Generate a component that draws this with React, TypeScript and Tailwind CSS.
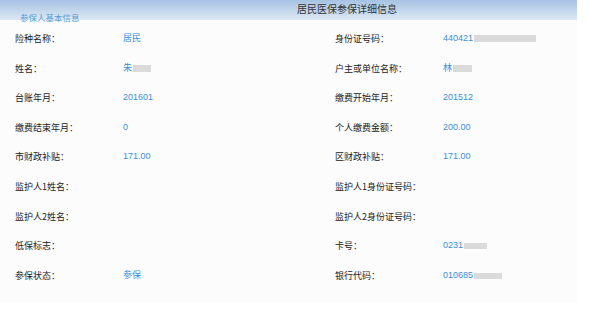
import React from "react";

type Cell = { label: string; value?: string; blur?: number };

const rows: [Cell, Cell][] = [
  [{ label: "险种名称：", value: "居民" }, { label: "身份证号码：", value: "440421", blur: 62 }],
  [{ label: "姓名：", value: "朱", blur: 18 }, { label: "户主或单位名称：", value: "林", blur: 19 }],
  [{ label: "台账年月：", value: "201601" }, { label: "缴费开始年月：", value: "201512" }],
  [{ label: "缴费结束年月：", value: "0" }, { label: "个人缴费金额：", value: "200.00" }],
  [{ label: "市财政补贴：", value: "171.00" }, { label: "区财政补贴：", value: "171.00" }],
  [{ label: "监护人1姓名：" }, { label: "监护人1身份证号码：" }],
  [{ label: "监护人2姓名：" }, { label: "监护人2身份证号码：" }],
  [{ label: "低保标志：" }, { label: "卡号：", value: "0231", blur: 23 }],
  [{ label: "参保状态：", value: "参保" }, { label: "银行代码：", value: "010685", blur: 28 }],
];

const font = { fontFamily: '"Noto Sans CJK SC", "Liberation Sans", sans-serif' };

function Value({ c }: { c: Cell }) {
  if (!c.value) return <div />;
  return (
    <div className="flex items-center text-[9px] text-[#3a8fd9]" style={{ fontFamily: '"Liberation Sans", "Noto Sans CJK SC", sans-serif' }}>
      <span>{c.value}</span>
      {c.blur ? (
        c.blur === 18 ? (
          <span className="ml-[1px] h-[7px] w-[18px] bg-[#dadada] blur-[0.6px]" />
        ) : c.blur === 19 ? (
          <span className="ml-[1px] h-[7px] w-[19px] bg-[#dadada] blur-[0.6px]" />
        ) : c.blur === 23 ? (
          <span className="ml-[1px] h-[6px] w-[23px] bg-[#dadada] blur-[0.6px]" />
        ) : c.blur === 28 ? (
          <span className="ml-[1px] h-[6px] w-[28px] bg-[#dadada] blur-[0.6px]" />
        ) : (
          <span className="ml-[1px] h-[7px] w-[62px] bg-[#dadada] blur-[0.6px]" />
        )
      ) : null}
    </div>
  );
}

export default function App() {
  return (
    <div className="w-[590px] h-[331px] bg-white" style={font}>
      <div className="w-[577px] bg-[#fcfcfc] pb-[12px]">
        <div className="relative h-[20px] bg-gradient-to-b from-[#a6c3e3] to-[#dde8f5]">
          <div className="pl-[297px] pt-[2px] text-[10px] leading-[14px] text-[#333]">居民医保参保详细信息</div>
          <div className="absolute left-[20px] top-[11px] text-[8.5px] leading-[12px] text-[#5b9bd0]">参保人基本信息</div>
        </div>
        <div className="pt-[4px] pl-[15px]">
          {rows.map((r, i) => (
            <div key={i} className="grid grid-cols-[108px_212px_108px_1fr] h-[29.6px] items-center">
              <div className="text-[9px] text-[#222]">{r[0].label}</div>
              <Value c={r[0]} />
              <div className="text-[9px] text-[#222]">{r[1].label}</div>
              <Value c={r[1]} />
            </div>
          ))}
        </div>
      </div>
    </div>
  );
}
